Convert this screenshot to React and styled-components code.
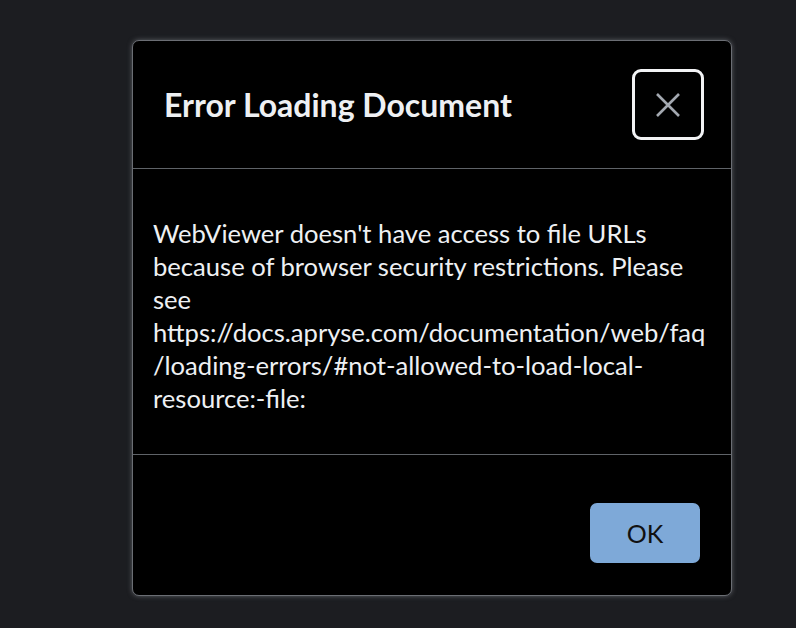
import React from 'react'
import styled, { createGlobalStyle } from 'styled-components'

const GlobalStyle = createGlobalStyle`
  html, body {
    margin: 0;
    padding: 0;
    background: #1c1d21;
    font-family: 'Lato', sans-serif;
  }
`

const Page = styled.div`
  width: 796px;
  height: 628px;
  background: #1c1d21;
  padding: 40px 0 0 132px;
  box-sizing: border-box;
`

const Modal = styled.div`
  width: 600px;
  height: 556px;
  box-sizing: border-box;
  background: #000;
  border: 1px solid #6b6e74;
  border-radius: 7px;
  box-shadow: 0 0 5px rgba(120, 124, 130, 0.7);
  display: flex;
  flex-direction: column;
  overflow: hidden;
`

const Header = styled.header`
  height: 127px;
  display: flex;
  align-items: center;
  justify-content: space-between;
  padding: 0 27px 0 31px;
  border-bottom: 1px solid #5f6368;
  flex-shrink: 0;
`

const Title = styled.h2`
  margin: 0;
  font-size: 32px;
  font-weight: 700;
  color: #eef0f3;
`

const CloseButton = styled.button`
  width: 72px;
  height: 71px;
  box-sizing: border-box;
  border: 3px solid #f2f3f5;
  border-radius: 9px;
  background: transparent;
  display: flex;
  align-items: center;
  justify-content: center;
  padding: 0;
  cursor: pointer;
`

const Body = styled.div`
  height: 286px;
  box-sizing: border-box;
  padding: 48px 20px 0 20px;
  border-bottom: 1px solid #5f6368;
  flex-shrink: 0;
`

const Message = styled.p`
  margin: 0;
  font-size: 25.6px;
  line-height: 33px;
  color: #eef0f3;
  overflow-wrap: break-word;
`

const Footer = styled.footer`
  flex: 1;
  display: flex;
  justify-content: flex-end;
  align-items: flex-start;
  padding: 48px 31px 0 0;
`

const OkButton = styled.button`
  width: 110px;
  height: 60px;
  border: none;
  border-radius: 7px;
  background: #7ea9d8;
  color: #111;
  font-family: 'Lato', sans-serif;
  font-size: 25px;
  cursor: pointer;
`

function CloseIcon() {
  return (
    <svg width="28" height="28" viewBox="0 0 28 28">
      <path d="M3 3 L25 25 M25 3 L3 25" stroke="#a3a8b0" strokeWidth="2.6" fill="none" />
    </svg>
  )
}

export default function App() {
  return (
    <Page>
      <GlobalStyle />
      <Modal>
        <Header>
          <Title>Error Loading Document</Title>
          <CloseButton aria-label="Close">
            <CloseIcon />
          </CloseButton>
        </Header>
        <Body>
          <Message>
            WebViewer doesn't have access to file URLs because of browser security restrictions. Please see https://docs.apryse.com/documentation/web/faq/loading-errors/#not-allowed-to-load-local-resource:-file:
          </Message>
        </Body>
        <Footer>
          <OkButton>OK</OkButton>
        </Footer>
      </Modal>
    </Page>
  )
}
